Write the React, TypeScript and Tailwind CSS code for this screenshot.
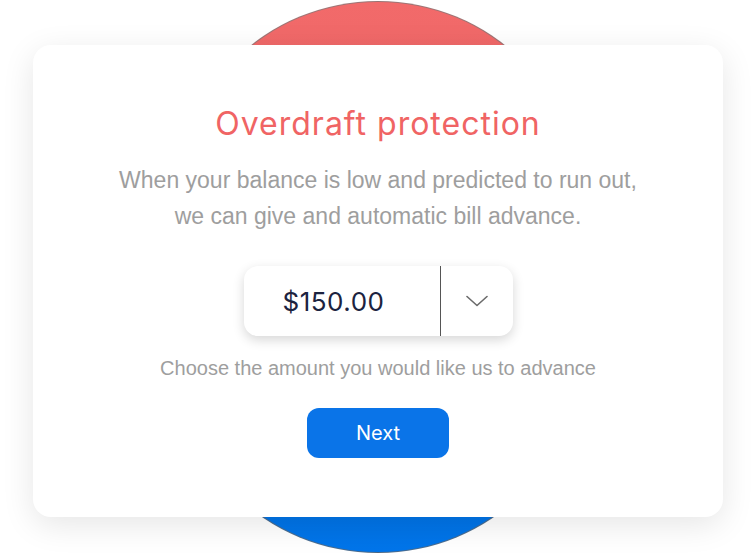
import React from "react";

export default function App() {
  return (
    <div className="relative w-[756px] h-[554px] bg-white overflow-hidden">
      <div className="absolute left-[173px] top-[1px] w-[410px] h-[410px] rounded-full border border-[#7a7a7a]/70 bg-[linear-gradient(180deg,#f26a6a_0%,#e05c5c_100%)]" />
      <div className="absolute left-[173px] top-[143px] w-[410px] h-[410px] rounded-full border border-[#6a6a6a]/70 bg-[linear-gradient(180deg,#0060c0_0%,#0075ea_100%)]" />
      <div className="relative ml-[33px] mt-[45px] w-[690px] h-[472px] bg-white rounded-[18px] shadow-[0_8px_32px_rgba(0,0,0,0.10)] flex flex-col items-center pt-[61px]">
        <h1 className="text-[32px] leading-[36px] text-[#f06464] font-normal font-['Inter',sans-serif] tracking-[1px]">
          Overdraft protection
        </h1>
        <p className="mt-[20px] text-center text-[23px] leading-[36px] text-[#9e9e9e] font-['Liberation_Sans',Arial,sans-serif]">
          When your balance is low and predicted to run out,
          <br />
          we can give and automatic bill advance.
        </p>
        <div className="mt-[32px] w-[269px] h-[70px] rounded-[14px] bg-white shadow-[0_4px_12px_rgba(0,0,0,0.16)] flex items-stretch">
          <div className="w-[196px] pr-[16px] flex items-center justify-center text-[26px] tracking-[0.5px] text-[#1c2340] font-['Inter',sans-serif]">
            $150.00
          </div>
          <div className="w-px bg-[#555555]" />
          <div className="flex-1 flex items-center justify-center">
            <svg width="22" height="12" viewBox="0 0 22 12" fill="none">
              <polyline points="1,1.5 11,10.5 21,1.5" stroke="#6b6b6b" strokeWidth="1.6" strokeLinecap="round" strokeLinejoin="round" />
            </svg>
          </div>
        </div>
        <p className="mt-[20px] text-[20px] leading-[24px] text-[#9e9e9e] font-['Liberation_Sans',Arial,sans-serif]">
          Choose the amount you would like us to advance
        </p>
        <button className="mt-[28px] w-[142px] h-[50px] rounded-[12px] bg-[#0a74e8] text-white text-[20px] font-['Inter',sans-serif]">
          Next
        </button>
      </div>
    </div>
  );
}
